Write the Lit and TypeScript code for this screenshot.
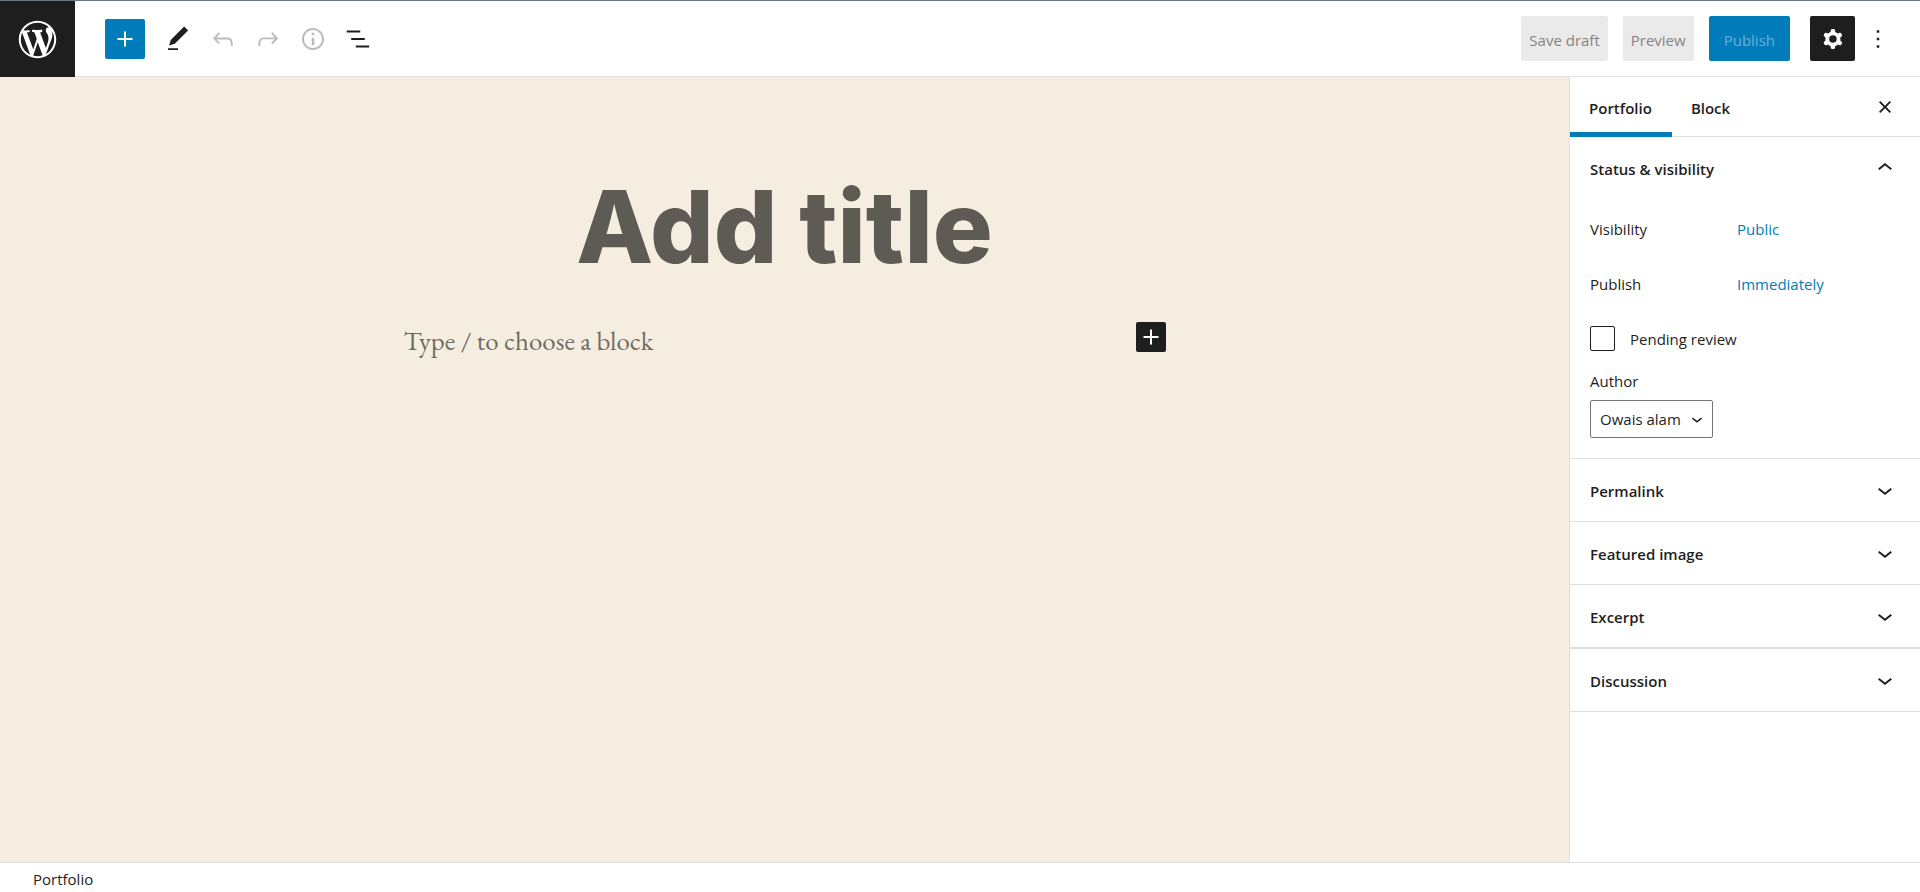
import { LitElement, html, css, svg } from "lit";
import { customElement, property, state } from "lit/decorators.js";

const ICONS: Record<string, string> = {
  wordpress:
    "M20 10c0-5.51-4.49-10-10-10C4.48 0 0 4.49 0 10c0 5.52 4.48 10 10 10 5.51 0 10-4.48 10-10zM7.78 15.37L4.37 6.22c.55-.02 1.17-.08 1.17-.08.5-.06.44-1.13-.06-1.11 0 0-1.45.11-2.37.11-.18 0-.37 0-.58-.01C4.12 2.69 6.87 1.11 10 1.11c2.33 0 4.45.87 6.05 2.34-.68-.11-1.65.39-1.65 1.58 0 .74.45 1.36.9 2.1.35.61.55 1.36.55 2.46 0 1.49-1.4 5-1.4 5l-3.03-8.37c.54-.02.82-.17.82-.17.5-.05.44-1.25-.06-1.22 0 0-1.44.12-2.38.12-.87 0-2.33-.12-2.33-.12-.5-.03-.56 1.2-.06 1.22l.92.08 1.26 3.41zM17.41 10c.24-.64.74-1.87.43-4.25.7 1.29 1.05 2.71 1.05 4.25 0 3.29-1.73 6.24-4.4 7.78.97-2.59 1.94-5.2 2.92-7.78zM6.1 18.09C3.12 16.65 1.11 13.53 1.11 10c0-1.3.23-2.48.72-3.59C3.25 10.3 4.67 14.2 6.1 18.09zm4.03-6.63l2.58 6.98c-.86.29-1.76.45-2.71.45-.79 0-1.57-.11-2.29-.33.81-2.38 1.62-4.74 2.42-7.1z",
  plus: "M18 11.2h-5.2V6h-1.6v5.2H6v1.6h5.2V18h1.6v-5.2H18z",
  edit: "M20.1 5.1L16.9 2 6.2 12.7l-1.3 4.4 4.5-1.3L20.1 5.1zM4 20.8h8v-1.5H4v1.5z",
  undo: "M18.3 11.7c-.6-.6-1.4-.9-2.3-.9H6.7l2.9-3.3-1.1-1-4.5 5L8.5 16l1-1-2.7-2.7H16c.5 0 .9.2 1.3.5 1 1 1 3.4 1 4.5v.3h1.5v-.2c0-1.5 0-4.3-1.5-5.7z",
  redo: "M15.6 6.5l-1.1 1 2.9 3.3H8c-.9 0-1.7.3-2.3.9-1.4 1.5-1.4 4.2-1.4 5.6v.2h1.5v-.3c0-1.1 0-3.5 1-4.5.3-.3.7-.5 1.3-.5h9.2L14.5 15l1.1 1.1 4.6-4.6-4.6-5z",
  info: "M12 3.2c-4.8 0-8.8 3.9-8.8 8.8 0 4.8 3.9 8.8 8.8 8.8 4.8 0 8.8-3.9 8.8-8.8 0-4.8-4-8.8-8.8-8.8zm0 16c-4 0-7.2-3.3-7.2-7.2C4.8 8 8 4.8 12 4.8s7.2 3.3 7.2 7.2c0 4-3.2 7.2-7.2 7.2zM11 17h2v-6h-2v6zm0-8h2V7h-2v2z",
  list: "M13.8 5.2H3v1.5h10.8V5.2zm-3.6 12v1.5H21v-1.5H10.2zm7.2-6H6.6v1.5h10.8v-1.5z",
  cog: "M10.289 4.836A1 1 0 0111.275 4h1.306a1 1 0 01.987.836l.244 1.466c.787.26 1.503.679 2.108 1.218l1.393-.522a1 1 0 011.216.437l.653 1.13a1 1 0 01-.23 1.273l-1.148.944a6.025 6.025 0 010 2.435l1.149.946a1 1 0 01.23 1.272l-.653 1.13a1 1 0 01-1.216.437l-1.394-.522c-.605.54-1.32.958-2.108 1.218l-.244 1.466a1 1 0 01-.987.836h-1.306a1 1 0 01-.986-.836l-.244-1.466a5.995 5.995 0 01-2.108-1.218l-1.394.522a1 1 0 01-1.217-.436l-.653-1.131a1 1 0 01.23-1.272l1.149-.946a6.026 6.026 0 010-2.435l-1.148-.944a1 1 0 01-.23-1.272l.653-1.131a1 1 0 011.217-.437l1.393.522a5.994 5.994 0 012.108-1.218l.244-1.466zM14.929 12a3 3 0 11-6 0 3 3 0 016 0z",
  more: "M13 19h-2v-2h2v2zm0-6h-2v-2h2v2zm0-6h-2V5h2v2z",
  close:
    "M12 13.06l3.712 3.713 1.061-1.06L13.061 12l3.712-3.712-1.06-1.06L12 10.938 8.288 7.227l-1.061 1.06L10.939 12l-3.712 3.712 1.06 1.061L12 13.061z",
  down: "M17.5 11.6L12 16l-5.5-4.4.9-1.2L12 14l4.5-3.6 1 1.2z",
  up: "M6.5 12.4L12 8l5.5 4.4-.9 1.2L12 10l-4.5 3.6-1-1.2z",
};

function icon(name: string, size = 30) {
  const box = name === "wordpress" ? "-2 -2 24 24" : "0 0 24 24";
  return html`<svg viewBox=${box} width=${size} height=${size} fill="currentColor" aria-hidden="true">
    ${svg`<path fill-rule="evenodd" d=${ICONS[name]}></path>`}
  </svg>`;
}

const base = css`
  * {
    box-sizing: border-box;
  }
  svg {
    display: block;
    flex: none;
  }
  button,
  select,
  input,
  textarea {
    font: inherit;
    color: inherit;
    margin: 0;
  }
  button {
    display: flex;
    align-items: center;
    justify-content: center;
    padding: 0;
    border: 0;
    border-radius: 2px;
    background: none;
    cursor: pointer;
  }
  button:disabled {
    cursor: default;
  }
`;

@customElement("editor-header")
export class EditorHeader extends LitElement {
  static styles = [
    base,
    css`
      :host {
        display: flex;
        align-items: stretch;
        justify-content: space-between;
        height: 77px;
        border-top: 1px solid #6c7781;
        background: #fff;
      }
      .logo {
        display: flex;
        align-items: center;
        justify-content: center;
        width: 75px;
        background: #1e1e1e;
        color: #fff;
      }
      .left,
      .right,
      .tools {
        display: flex;
        align-items: center;
      }
      .left {
        align-items: stretch;
        flex: 1;
      }
      .tools {
        flex: 1;
        padding-left: 30px;
      }
      .tools,
      .right {
        border-bottom: 1px solid #e0e0e0;
      }
      .insert {
        width: 40px;
        height: 40px;
        margin-right: 10px;
        background: #007cba;
        color: #fff;
      }
      .tool {
        width: 45px;
        height: 45px;
      }
      .tool:disabled {
        color: #bbb;
      }
      .right {
        gap: 15px;
        padding-right: 20px;
      }
      .action {
        height: 45px;
        padding: 2px 8px 0;
        background: #eaeaea;
        color: #848484;
      }
      .publish {
        padding: 2px 15px 0;
        background: #007cba;
        color: #66b0d6;
      }
      .menu {
        display: flex;
        padding-left: 5px;
      }
      .settings {
        width: 45px;
        height: 45px;
        background: #1e1e1e;
        color: #fff;
      }
      .more {
        width: 45px;
        height: 45px;
      }
    `,
  ];

  render() {
    return html`
      <div class="left">
        <a class="logo" href="#" aria-label="View posts">${icon("wordpress", 45)}</a>
        <div class="tools" role="toolbar" aria-label="Document tools">
          <button class="insert" aria-label="Add block">${icon("plus")}</button>
          <button class="tool" aria-label="Tools">${icon("edit")}</button>
          <button class="tool" aria-label="Undo" disabled>${icon("undo")}</button>
          <button class="tool" aria-label="Redo" disabled>${icon("redo")}</button>
          <button class="tool" aria-label="Details" disabled>${icon("info")}</button>
          <button class="tool" aria-label="List view">${icon("list")}</button>
        </div>
      </div>
      <div class="right">
        <button class="action" disabled>Save draft</button>
        <button class="action" disabled>Preview</button>
        <button class="action publish" disabled>Publish</button>
        <div class="menu">
          <button class="settings" aria-label="Settings" aria-pressed="true">${icon("cog")}</button>
          <button class="more" aria-label="Options">${icon("more")}</button>
        </div>
      </div>
    `;
  }
}

@customElement("editor-canvas")
export class EditorCanvas extends LitElement {
  static styles = [
    base,
    css`
      :host {
        display: flex;
        flex-direction: column;
        align-items: center;
        background: #f5eee0;
        padding: 84px 20px 0;
      }
      .title,
      .text {
        display: block;
        border: 0;
        padding: 0;
        outline: 0;
        background: none;
        min-width: 0;
      }
      .title::placeholder,
      .text::placeholder {
        color: inherit;
        opacity: 1;
      }
      .title {
        width: 100%;
        height: 132px;
        font: 800 100px/132px Inter, "Liberation Sans", sans-serif;
        text-align: center;
        color: #5e5b54;
      }
      .block {
        display: flex;
        align-items: flex-start;
        width: 100%;
        max-width: 762px;
        margin-top: 29px;
      }
      .text {
        flex: 1;
        height: 38px;
        font: 27px/38px "EB Garamond", Garamond, "Liberation Serif", serif;
        color: #6f6c64;
      }
      .add {
        width: 30px;
        height: 30px;
        background: #1e1e1e;
        color: #fff;
      }
    `,
  ];

  render() {
    return html`
      <input class="title" aria-label="Title" placeholder="Add title" />
      <div class="block">
        <input class="text" aria-label="Block text" placeholder="Type / to choose a block" />
        <button class="add" aria-label="Add block">${icon("plus")}</button>
      </div>
    `;
  }
}

@customElement("settings-panel")
export class SettingsPanel extends LitElement {
  @property() heading = "";
  @property({ type: Boolean, reflect: true }) open = false;

  static styles = [
    base,
    css`
      :host {
        display: block;
        border-bottom: 1px solid #e0e0e0;
      }
      :host(:last-of-type) {
        border-top: 1px solid #e0e0e0;
      }
      .heading {
        margin: 0;
        font: inherit;
      }
      .toggle {
        width: 100%;
        height: 62px;
        padding: 0 20px;
        justify-content: space-between;
        font-weight: 600;
      }
      .name {
        padding-top: 2px;
      }
      .body {
        padding: 7px 20px 20px;
      }
    `,
  ];

  render() {
    return html`
      <h2 class="heading">
        <button class="toggle" aria-expanded=${this.open} @click=${() => (this.open = !this.open)}>
          <span class="name">${this.heading}</span>${icon(this.open ? "up" : "down")}
        </button>
      </h2>
      ${this.open ? html`<div class="body"><slot></slot></div>` : null}
    `;
  }
}

@customElement("editor-sidebar")
export class EditorSidebar extends LitElement {
  @state() private tab = "Portfolio";

  static styles = [
    base,
    css`
      :host {
        display: block;
        border-left: 1px solid #e0e0e0;
        background: #fff;
        overflow: auto;
      }
      .tabs {
        display: flex;
        align-items: center;
        height: 60px;
        padding-right: 13px;
        border-bottom: 1px solid #e0e0e0;
      }
      .tab {
        height: 60px;
        padding: 7px 20px 0 19px;
        border-bottom: 5px solid transparent;
        border-radius: 0;
        font-weight: 600;
      }
      .tab[aria-selected="true"] {
        border-bottom-color: #007cba;
      }
      .close {
        width: 45px;
        height: 45px;
        margin-left: auto;
      }
      .row {
        display: grid;
        grid-template-columns: 147px 1fr;
        align-items: center;
        height: 45px;
        margin-bottom: 10px;
      }
      .value {
        justify-self: start;
        color: #007cba;
      }
      .check {
        display: flex;
        align-items: center;
        gap: 15px;
        height: 25px;
        margin-top: 20px;
      }
      .box {
        appearance: none;
        width: 25px;
        height: 25px;
        border: 1px solid #1e1e1e;
        border-radius: 2px;
        background: #fff;
      }
      .box:checked {
        background: #007cba;
      }
      .author {
        display: block;
        margin: 20px 0 9px;
        line-height: 20px;
      }
      .picker {
        display: inline-grid;
        align-items: center;
        justify-items: end;
        vertical-align: top;
      }
      .picker > * {
        grid-area: 1 / 1;
      }
      .select {
        appearance: none;
        height: 38px;
        padding: 0 31px 0 9px;
        border: 1px solid #757575;
        border-radius: 2px;
        background: #fff;
      }
      .arrow {
        margin-right: 5px;
        pointer-events: none;
      }
    `,
  ];

  render() {
    return html`
      <div class="tabs" role="tablist">
        ${["Portfolio", "Block"].map(
          (name) => html`<button
            class="tab"
            role="tab"
            aria-selected=${this.tab === name}
            @click=${() => (this.tab = name)}
          >
            ${name}
          </button>`,
        )}
        <button class="close" aria-label="Close settings">${icon("close")}</button>
      </div>
      <settings-panel heading="Status &amp; visibility" open>
        <div class="row"><span>Visibility</span><button class="value">Public</button></div>
        <div class="row"><span>Publish</span><button class="value">Immediately</button></div>
        <div class="check">
          <input class="box" type="checkbox" id="pending" />
          <label for="pending">Pending review</label>
        </div>
        <label class="author" for="author">Author</label>
        <div class="picker">
          <select class="select" id="author">
            <option>Owais alam</option>
          </select>
          <span class="arrow">${icon("down", 22)}</span>
        </div>
      </settings-panel>
      ${["Permalink", "Featured image", "Excerpt", "Discussion"].map(
        (name) => html`<settings-panel heading=${name}></settings-panel>`,
      )}
    `;
  }
}

@customElement("app-root")
export class AppRoot extends LitElement {
  static styles = [
    base,
    css`
      :host {
        display: grid;
        grid-template-rows: auto 1fr auto;
        height: 100vh;
        font: 15px/20px "Open Sans", "Noto Sans", sans-serif;
        color: #1e1e1e;
        background: #fff;
      }
      .main {
        display: grid;
        grid-template-columns: 1fr 351px;
        min-height: 0;
      }
      .footer {
        padding: 6px 33px 3px;
        border-top: 1px solid #e0e0e0;
      }
    `,
  ];

  render() {
    return html`
      <editor-header></editor-header>
      <div class="main">
        <editor-canvas></editor-canvas>
        <editor-sidebar></editor-sidebar>
      </div>
      <footer class="footer">Portfolio</footer>
    `;
  }
}
